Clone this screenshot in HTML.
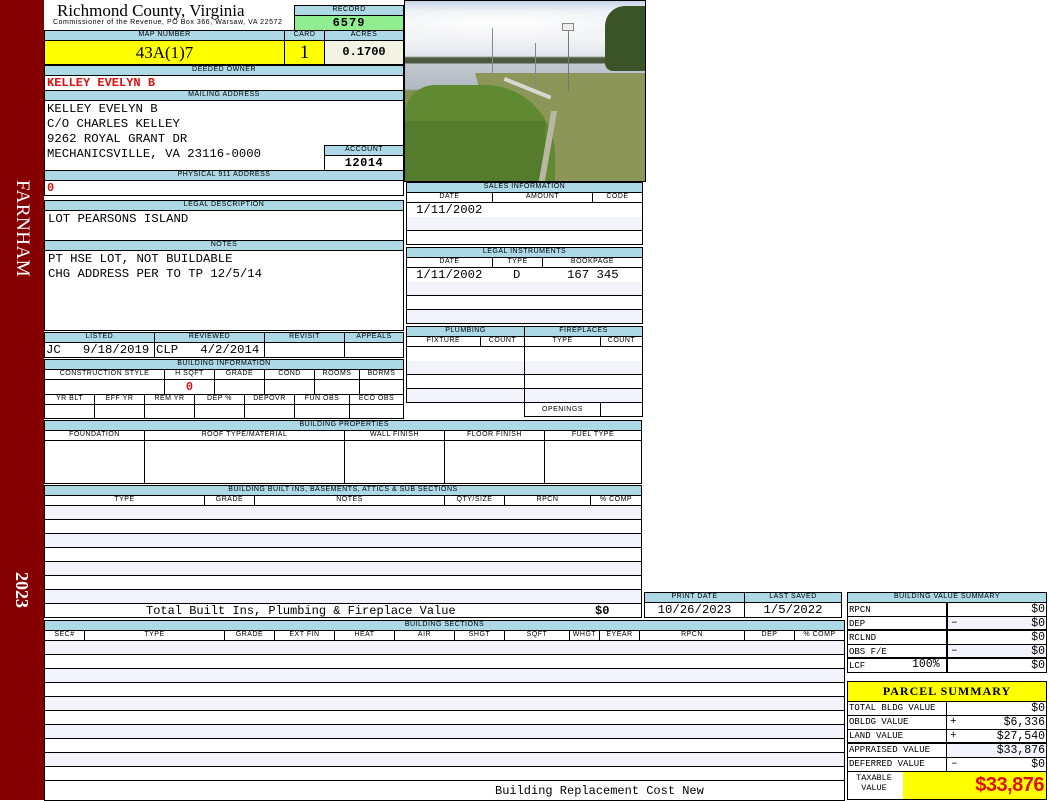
<!DOCTYPE html>
<html><head><meta charset="utf-8">
<style>
*{margin:0;padding:0;box-sizing:border-box}
body{width:1050px;height:800px;background:#fff;position:relative;overflow:hidden;font-family:"Liberation Sans",sans-serif}
.a{position:absolute}
.h{position:absolute;background:#add8e6;border:1px solid #000;font:7px/8px "Liberation Sans",sans-serif;text-align:center;color:#000;letter-spacing:.5px;white-space:nowrap;overflow:hidden}
.s{position:absolute;border:1px solid #000;font:7px/8px "Liberation Sans",sans-serif;text-align:center;white-space:nowrap;overflow:hidden;background:#fff;letter-spacing:.5px}
.bx{position:absolute;border:1px solid #000;background:#fff}
.m{font-family:"Liberation Mono",monospace;color:#000}
.ln{position:absolute;height:1px;background:#000}
.sh{position:absolute;background:#f3f3fb}
.vl{position:absolute;width:1px;background:#000}
</style></head><body>
<div class="a" style="left:0;top:0;width:44px;height:800px;background:#850000"></div>
<div class="a" style="left:10px;top:180px;width:24px;height:125px;">
<div style="position:absolute;left:24px;top:0;transform-origin:0 0;transform:rotate(90deg);font:19px/24px 'Liberation Serif',serif;color:#fff;white-space:nowrap;letter-spacing:0.5px">FARNHAM</div></div>
<div class="a" style="left:10px;top:572px;width:24px;height:50px;">
<div style="position:absolute;left:24px;top:0;transform-origin:0 0;transform:rotate(90deg);font:bold 18px/24px 'Liberation Serif',serif;color:#fff;white-space:nowrap">2023</div></div>

<div class="a" style="left:57px;top:2px;font:17px/18px 'Liberation Serif',serif">Richmond County, Virginia</div>
<div class="a" style="left:53px;top:19px;font:7px/8px 'Liberation Sans',sans-serif;letter-spacing:.55px">Commissioner of the Revenue, PO Box 366, Warsaw, VA 22572</div>
<div class="h" style="left:294px;top:5px;width:110px;height:11px">RECORD</div>
<div class="bx m" style="left:294px;top:15px;width:110px;height:16px;background:#90ee90;text-align:center;font-size:12px;line-height:14px;font-weight:bold;letter-spacing:1px">6579</div>

<div class="h" style="left:44px;top:30px;width:241px;height:11px">MAP NUMBER</div>
<div class="h" style="left:284px;top:30px;width:41px;height:11px">CARD</div>
<div class="h" style="left:324px;top:30px;width:80px;height:11px">ACRES</div>
<div class="bx" style="left:44px;top:40px;width:241px;height:25px;background:#ffff00;text-align:center;font:17px/23px 'Liberation Serif',serif">43A(1)7</div>
<div class="bx" style="left:284px;top:40px;width:41px;height:25px;background:#ffff00;text-align:center;font:19px/23px 'Liberation Serif',serif">1</div>
<div class="bx m" style="left:324px;top:40px;width:80px;height:25px;background:#f3f3e3;text-align:center;font-size:12px;line-height:23px;font-weight:bold">0.1700</div>

<div class="h" style="left:44px;top:65px;width:360px;height:11px">DEEDED OWNER</div>
<div class="bx m" style="left:44px;top:75px;width:360px;height:16px;font-weight:bold;font-size:12px;line-height:15px;padding-left:2px;color:#dd1111">KELLEY EVELYN B</div>
<div class="h" style="left:44px;top:90px;width:360px;height:11px">MAILING ADDRESS</div>
<div class="bx m" style="left:44px;top:100px;width:360px;height:71px;font-size:12.3px;line-height:15px;padding:1px 0 0 2px">KELLEY EVELYN B<br>C/O CHARLES KELLEY<br>9262 ROYAL GRANT DR<br>MECHANICSVILLE, VA 23116-0000</div>
<div class="h" style="left:324px;top:145px;width:80px;height:11px">ACCOUNT</div>
<div class="bx m" style="left:324px;top:155px;width:80px;height:16px;text-align:center;font-weight:bold;font-size:12px;line-height:14px;letter-spacing:.5px">12014</div>
<div class="h" style="left:44px;top:170px;width:360px;height:11px">PHYSICAL 911 ADDRESS</div>
<div class="bx m" style="left:44px;top:180px;width:360px;height:16px;color:#cc1111;font-weight:bold;font-size:12px;line-height:14px;padding-left:2px">0</div>
<div class="h" style="left:44px;top:200px;width:360px;height:11px">LEGAL DESCRIPTION</div>
<div class="bx m" style="left:44px;top:210px;width:360px;height:31px;font-size:12.3px;line-height:16px;padding-left:3px">LOT PEARSONS ISLAND</div>
<div class="h" style="left:44px;top:240px;width:360px;height:11px">NOTES</div>
<div class="bx m" style="left:44px;top:250px;width:360px;height:81px;font-size:12.3px;line-height:15px;padding:1px 0 0 3px">PT HSE LOT, NOT BUILDABLE<br>CHG ADDRESS PER TO TP 12/5/14</div>

<div class="h" style="left:44px;top:332px;width:111px;height:11px">LISTED</div>
<div class="h" style="left:154px;top:332px;width:111px;height:11px">REVIEWED</div>
<div class="h" style="left:264px;top:332px;width:81px;height:11px">REVISIT</div>
<div class="h" style="left:344px;top:332px;width:60px;height:11px">APPEALS</div>
<div class="bx m" style="left:44px;top:342px;width:111px;height:16px;font-size:12.3px;line-height:14px;padding-left:1px;white-space:pre">JC   9/18/2019</div>
<div class="bx m" style="left:154px;top:342px;width:111px;height:16px;font-size:12.3px;line-height:14px;padding-left:1px;white-space:pre">CLP   4/2/2014</div>
<div class="bx" style="left:264px;top:342px;width:81px;height:16px"></div>
<div class="bx" style="left:344px;top:342px;width:60px;height:16px"></div>

<div class="h" style="left:44px;top:359px;width:360px;height:11px">BUILDING INFORMATION</div>
<div class="s" style="left:44px;top:369px;width:121px;height:11px">CONSTRUCTION STYLE</div>
<div class="s" style="left:164px;top:369px;width:51px;height:11px">H SQFT</div>
<div class="s" style="left:214px;top:369px;width:51px;height:11px">GRADE</div>
<div class="s" style="left:264px;top:369px;width:51px;height:11px">COND</div>
<div class="s" style="left:314px;top:369px;width:46px;height:11px">ROOMS</div>
<div class="s" style="left:359px;top:369px;width:45px;height:11px">BDRMS</div>
<div class="bx" style="left:44px;top:379px;width:121px;height:16px"></div>
<div class="bx m" style="left:164px;top:379px;width:51px;height:16px;color:#cc1111;font-weight:bold;font-size:12px;line-height:15px;text-align:center">0</div>
<div class="bx" style="left:214px;top:379px;width:51px;height:16px"></div>
<div class="bx" style="left:264px;top:379px;width:51px;height:16px"></div>
<div class="bx" style="left:314px;top:379px;width:46px;height:16px"></div>
<div class="bx" style="left:359px;top:379px;width:45px;height:16px"></div>
<div class="s" style="left:44px;top:394px;width:51px;height:11px">YR BLT</div>
<div class="s" style="left:94px;top:394px;width:51px;height:11px">EFF YR</div>
<div class="s" style="left:144px;top:394px;width:51px;height:11px">REM YR</div>
<div class="s" style="left:194px;top:394px;width:51px;height:11px">DEP %</div>
<div class="s" style="left:244px;top:394px;width:51px;height:11px">DEPOVR</div>
<div class="s" style="left:294px;top:394px;width:56px;height:11px">FUN OBS</div>
<div class="s" style="left:349px;top:394px;width:55px;height:11px">ECO OBS</div>
<div class="bx" style="left:44px;top:404px;width:51px;height:15px"></div>
<div class="bx" style="left:94px;top:404px;width:51px;height:15px"></div>
<div class="bx" style="left:144px;top:404px;width:51px;height:15px"></div>
<div class="bx" style="left:194px;top:404px;width:51px;height:15px"></div>
<div class="bx" style="left:244px;top:404px;width:51px;height:15px"></div>
<div class="bx" style="left:294px;top:404px;width:56px;height:15px"></div>
<div class="bx" style="left:349px;top:404px;width:55px;height:15px"></div>

<!-- photo -->
<div class="a" style="left:404px;top:0;width:242px;height:182px;background:#000"></div>
<div class="a" style="left:405px;top:1px;width:240px;height:180px;overflow:hidden;background:linear-gradient(#c6d4e6 0,#eef1f5 10px,#f6f6f7 35px,#e2e6ec 55px,#4c5a40 57px,#4c5a40 62px,#c4c9d0 63px,#b0b8c2 88px,#7f9050 90px,#7f9050 100%)">
<div class="a" style="left:0;top:8px;width:240px;height:26px;background:radial-gradient(ellipse at 40% 50%,#fff 0,rgba(255,255,255,0) 70%)"></div>
<div class="a" style="left:200px;top:5px;width:40px;height:65px;background:#3a5428;border-radius:20px 0 0 8px"></div>
<div class="a" style="left:70px;top:72px;width:170px;height:110px;background:#8c9658;clip-path:polygon(0 0,100% 0,100% 100%,18% 100%)"></div>
<div class="a" style="left:0;top:84px;width:150px;height:100px;background:#5f8a32;border-radius:30px 70px 0 0"></div>
<div class="a" style="left:0;top:120px;width:140px;height:60px;background:#557c2c"></div>
<div class="a" style="left:140px;top:110px;width:6px;height:70px;background:#b9b6a4;transform:skewX(-10deg)"></div>
<div class="a" style="left:100px;top:76px;width:50px;height:4px;background:#d8d8d0;transform:rotate(22deg);transform-origin:0 0"></div>
<div class="a" style="left:163px;top:25px;width:1px;height:65px;background:#777"></div>
<div class="a" style="left:157px;top:22px;width:12px;height:8px;background:#eee;border:1px solid #888"></div>
<div class="a" style="left:130px;top:42px;width:1px;height:45px;background:#888"></div>
<div class="a" style="left:87px;top:27px;width:1px;height:45px;background:#888"></div>
</div>

<div class="h" style="left:406px;top:182px;width:237px;height:11px">SALES INFORMATION</div>
<div class="s" style="left:406px;top:192px;width:87px;height:11px">DATE</div>
<div class="s" style="left:492px;top:192px;width:101px;height:11px">AMOUNT</div>
<div class="s" style="left:592px;top:192px;width:51px;height:11px">CODE</div>
<div class="bx" style="left:406px;top:202px;width:237px;height:43px"></div>
<div class="sh" style="left:407px;top:217px;width:235px;height:13px"></div>
<div class="ln" style="left:406px;top:230px;width:237px"></div>
<div class="a m" style="left:416px;top:204px;font-size:12.3px;line-height:13px">1/11/2002</div>

<div class="h" style="left:406px;top:247px;width:237px;height:11px">LEGAL INSTRUMENTS</div>
<div class="s" style="left:406px;top:257px;width:87px;height:11px">DATE</div>
<div class="s" style="left:492px;top:257px;width:51px;height:11px">TYPE</div>
<div class="s" style="left:542px;top:257px;width:101px;height:11px">BOOKPAGE</div>
<div class="bx" style="left:406px;top:267px;width:237px;height:57px"></div>
<div class="sh" style="left:407px;top:282px;width:235px;height:13px"></div>
<div class="sh" style="left:407px;top:310px;width:235px;height:13px"></div>
<div class="ln" style="left:406px;top:295px;width:237px"></div>
<div class="ln" style="left:406px;top:309px;width:237px"></div>
<div class="a m" style="left:416px;top:269px;font-size:12.3px;line-height:13px">1/11/2002</div>
<div class="a m" style="left:513px;top:269px;font-size:12.3px;line-height:13px">D</div>
<div class="a m" style="left:567px;top:269px;font-size:12.3px;line-height:13px">167 345</div>

<div class="h" style="left:406px;top:326px;width:119px;height:11px">PLUMBING</div>
<div class="h" style="left:524px;top:326px;width:119px;height:11px">FIREPLACES</div>
<div class="s" style="left:406px;top:336px;width:75px;height:11px">FIXTURE</div>
<div class="s" style="left:480px;top:336px;width:45px;height:11px">COUNT</div>
<div class="s" style="left:524px;top:336px;width:77px;height:11px">TYPE</div>
<div class="s" style="left:600px;top:336px;width:43px;height:11px">COUNT</div>
<div class="bx" style="left:406px;top:346px;width:119px;height:57px"></div>
<div class="bx" style="left:524px;top:346px;width:119px;height:57px"></div>
<div class="sh" style="left:407px;top:361px;width:235px;height:13px"></div>
<div class="sh" style="left:407px;top:389px;width:235px;height:13px"></div>
<div class="ln" style="left:406px;top:374px;width:237px"></div>
<div class="ln" style="left:406px;top:388px;width:237px"></div>
<div class="vl" style="left:524px;top:346px;height:57px"></div>
<div class="s" style="left:524px;top:402px;width:77px;height:15px;line-height:13px">OPENINGS</div>
<div class="bx" style="left:600px;top:402px;width:43px;height:15px"></div>

<div class="h" style="left:44px;top:420px;width:598px;height:11px;text-align:right;padding-right:252px">BUILDING PROPERTIES</div>
<div class="s" style="left:44px;top:430px;width:101px;height:11px">FOUNDATION</div>
<div class="s" style="left:144px;top:430px;width:201px;height:11px">ROOF TYPE/MATERIAL</div>
<div class="s" style="left:344px;top:430px;width:101px;height:11px">WALL FINISH</div>
<div class="s" style="left:444px;top:430px;width:101px;height:11px">FLOOR FINISH</div>
<div class="s" style="left:544px;top:430px;width:98px;height:11px">FUEL TYPE</div>
<div class="bx" style="left:44px;top:440px;width:101px;height:44px"></div>
<div class="bx" style="left:144px;top:440px;width:201px;height:44px"></div>
<div class="bx" style="left:344px;top:440px;width:101px;height:44px"></div>
<div class="bx" style="left:444px;top:440px;width:101px;height:44px"></div>
<div class="bx" style="left:544px;top:440px;width:98px;height:44px"></div>

<div class="h" style="left:44px;top:485px;width:598px;height:11px">BUILDING BUILT INS, BASEMENTS, ATTICS &amp; SUB SECTIONS</div>
<div class="s" style="left:44px;top:495px;width:161px;height:11px">TYPE</div>
<div class="s" style="left:204px;top:495px;width:51px;height:11px">GRADE</div>
<div class="s" style="left:254px;top:495px;width:191px;height:11px">NOTES</div>
<div class="s" style="left:444px;top:495px;width:61px;height:11px">QTY/SIZE</div>
<div class="s" style="left:504px;top:495px;width:87px;height:11px">RPCN</div>
<div class="s" style="left:590px;top:495px;width:52px;height:11px">% COMP</div>
<div class="bx" style="left:44px;top:505px;width:598px;height:113px"></div>
<div class="sh" style="left:45px;top:506px;width:596px;height:13px"></div>
<div class="sh" style="left:45px;top:534px;width:596px;height:13px"></div>
<div class="sh" style="left:45px;top:562px;width:596px;height:13px"></div>
<div class="sh" style="left:45px;top:590px;width:596px;height:13px"></div>
<div class="ln" style="left:44px;top:519px;width:598px"></div>
<div class="ln" style="left:44px;top:533px;width:598px"></div>
<div class="ln" style="left:44px;top:547px;width:598px"></div>
<div class="ln" style="left:44px;top:561px;width:598px"></div>
<div class="ln" style="left:44px;top:575px;width:598px"></div>
<div class="ln" style="left:44px;top:589px;width:598px"></div>
<div class="ln" style="left:44px;top:603px;width:598px"></div>
<div class="a m" style="left:146px;top:604px;font-size:12px;line-height:14px;white-space:pre">Total Built Ins, Plumbing &amp; Fireplace Value</div>
<div class="a m" style="left:595px;top:604px;font-size:12px;line-height:14px;font-weight:bold">$0</div>

<div class="h" style="left:644px;top:592px;width:101px;height:11px">PRINT DATE</div>
<div class="h" style="left:744px;top:592px;width:98px;height:11px">LAST SAVED</div>
<div class="bx m" style="left:644px;top:602px;width:101px;height:16px;font-size:12.3px;line-height:14px;text-align:center">10/26/2023</div>
<div class="bx m" style="left:744px;top:602px;width:98px;height:16px;font-size:12.3px;line-height:14px;text-align:center">1/5/2022</div>

<div class="h" style="left:44px;top:620px;width:801px;height:11px">BUILDING SECTIONS</div>
<div class="s" style="left:44px;top:630px;width:41px;height:11px">SEC#</div>
<div class="s" style="left:84px;top:630px;width:141px;height:11px">TYPE</div>
<div class="s" style="left:224px;top:630px;width:51px;height:11px">GRADE</div>
<div class="s" style="left:274px;top:630px;width:61px;height:11px">EXT FIN</div>
<div class="s" style="left:334px;top:630px;width:61px;height:11px">HEAT</div>
<div class="s" style="left:394px;top:630px;width:61px;height:11px">AIR</div>
<div class="s" style="left:454px;top:630px;width:51px;height:11px">SHGT</div>
<div class="s" style="left:504px;top:630px;width:66px;height:11px">SQFT</div>
<div class="s" style="left:569px;top:630px;width:31px;height:11px">WHGT</div>
<div class="s" style="left:599px;top:630px;width:41px;height:11px">EYEAR</div>
<div class="s" style="left:639px;top:630px;width:106px;height:11px">RPCN</div>
<div class="s" style="left:744px;top:630px;width:51px;height:11px">DEP</div>
<div class="s" style="left:794px;top:630px;width:51px;height:11px">% COMP</div>
<div class="bx" style="left:44px;top:640px;width:801px;height:161px"></div>
<div class="sh" style="left:45px;top:641px;width:799px;height:13px"></div>
<div class="sh" style="left:45px;top:669px;width:799px;height:13px"></div>
<div class="sh" style="left:45px;top:697px;width:799px;height:13px"></div>
<div class="sh" style="left:45px;top:725px;width:799px;height:13px"></div>
<div class="sh" style="left:45px;top:753px;width:799px;height:13px"></div>
<div class="ln" style="left:44px;top:654px;width:801px"></div>
<div class="ln" style="left:44px;top:668px;width:801px"></div>
<div class="ln" style="left:44px;top:682px;width:801px"></div>
<div class="ln" style="left:44px;top:696px;width:801px"></div>
<div class="ln" style="left:44px;top:710px;width:801px"></div>
<div class="ln" style="left:44px;top:724px;width:801px"></div>
<div class="ln" style="left:44px;top:738px;width:801px"></div>
<div class="ln" style="left:44px;top:752px;width:801px"></div>
<div class="ln" style="left:44px;top:766px;width:801px"></div>
<div class="ln" style="left:44px;top:780px;width:801px"></div>
<div class="a m" style="left:495px;top:784px;font-size:12px;line-height:14px;white-space:pre">Building Replacement Cost New</div>

<div class="h" style="left:847px;top:592px;width:200px;height:11px">BUILDING VALUE SUMMARY</div>
<div class="bx" style="left:847px;top:602px;width:200px;height:71px"></div>
<div class="vl" style="left:946px;top:602px;height:71px;width:2px"></div>
<div class="sh" style="left:948px;top:617px;width:98px;height:13px"></div>
<div class="sh" style="left:948px;top:645px;width:98px;height:13px"></div>
<div class="ln" style="left:847px;top:616px;width:200px"></div>
<div class="ln" style="left:847px;top:629px;width:200px;height:2px"></div>
<div class="ln" style="left:847px;top:644px;width:200px"></div>
<div class="ln" style="left:847px;top:657px;width:200px;height:2px"></div>
<div class="a m" style="left:849px;top:603px;font-size:9px;line-height:14px">RPCN</div>
<div class="a m" style="left:849px;top:617px;font-size:9px;line-height:14px">DEP</div>
<div class="a m" style="left:849px;top:631px;font-size:9px;line-height:14px">RCLND</div>
<div class="a m" style="left:849px;top:645px;font-size:9px;line-height:14px">OBS F/E</div>
<div class="a m" style="left:849px;top:659px;font-size:9px;line-height:14px">LCF</div>
<div class="a m" style="left:912px;top:658px;font-size:11.5px;line-height:14px">100%</div>
<div class="a m" style="left:951px;top:616px;font-size:11px;line-height:14px">–</div>
<div class="a m" style="left:951px;top:644px;font-size:11px;line-height:14px">–</div>
<div class="a m" style="left:1000px;top:603px;width:45px;text-align:right;font-size:11.5px;line-height:14px">$0</div>
<div class="a m" style="left:1000px;top:617px;width:45px;text-align:right;font-size:11.5px;line-height:14px">$0</div>
<div class="a m" style="left:1000px;top:631px;width:45px;text-align:right;font-size:11.5px;line-height:14px">$0</div>
<div class="a m" style="left:1000px;top:645px;width:45px;text-align:right;font-size:11.5px;line-height:14px">$0</div>
<div class="a m" style="left:1000px;top:659px;width:45px;text-align:right;font-size:11.5px;line-height:14px">$0</div>

<div class="bx" style="left:847px;top:681px;width:200px;height:21px;background:#ffff00;text-align:center;font:bold 12px/19px 'Liberation Serif',serif;letter-spacing:1px">PARCEL SUMMARY</div>
<div class="bx" style="left:847px;top:701px;width:200px;height:99px"></div>
<div class="vl" style="left:946px;top:701px;height:71px"></div>
<div class="sh" style="left:948px;top:744px;width:98px;height:13px"></div>
<div class="ln" style="left:847px;top:715px;width:200px"></div>
<div class="ln" style="left:847px;top:729px;width:200px"></div>
<div class="ln" style="left:847px;top:742px;width:200px;height:2px"></div>
<div class="ln" style="left:847px;top:757px;width:200px"></div>
<div class="ln" style="left:847px;top:771px;width:200px"></div>
<div class="a m" style="left:849px;top:702px;font-size:9px;line-height:13px">TOTAL BLDG VALUE</div>
<div class="a m" style="left:849px;top:716px;font-size:9px;line-height:13px">OBLDG VALUE</div>
<div class="a m" style="left:849px;top:730px;font-size:9px;line-height:13px">LAND VALUE</div>
<div class="a m" style="left:849px;top:744px;font-size:9px;line-height:13px">APPRAISED VALUE</div>
<div class="a m" style="left:849px;top:758px;font-size:9px;line-height:13px">DEFERRED VALUE</div>
<div class="a m" style="left:950px;top:715px;font-size:11px;line-height:14px">+</div>
<div class="a m" style="left:950px;top:729px;font-size:11px;line-height:14px">+</div>
<div class="a m" style="left:951px;top:757px;font-size:11px;line-height:14px">–</div>
<div class="a m" style="left:960px;top:702px;width:85px;text-align:right;font-size:11.5px;line-height:13px">$0</div>
<div class="a m" style="left:960px;top:716px;width:85px;text-align:right;font-size:11.5px;line-height:13px">$6,336</div>
<div class="a m" style="left:960px;top:730px;width:85px;text-align:right;font-size:11.5px;line-height:13px">$27,540</div>
<div class="a m" style="left:960px;top:744px;width:85px;text-align:right;font-size:11.5px;line-height:13px">$33,876</div>
<div class="a m" style="left:960px;top:758px;width:85px;text-align:right;font-size:11.5px;line-height:13px">$0</div>
<div class="a m" style="left:848px;top:773px;width:52px;text-align:center;font-size:8.5px;line-height:10px">TAXABLE<br>VALUE</div>
<div class="a" style="left:903px;top:772px;width:143px;height:27px;background:#ffff00;text-align:right;font:bold 20px/27px 'Liberation Sans',sans-serif;color:#e01010;padding-right:2px;letter-spacing:-.5px">$33,876</div>
</body></html>
